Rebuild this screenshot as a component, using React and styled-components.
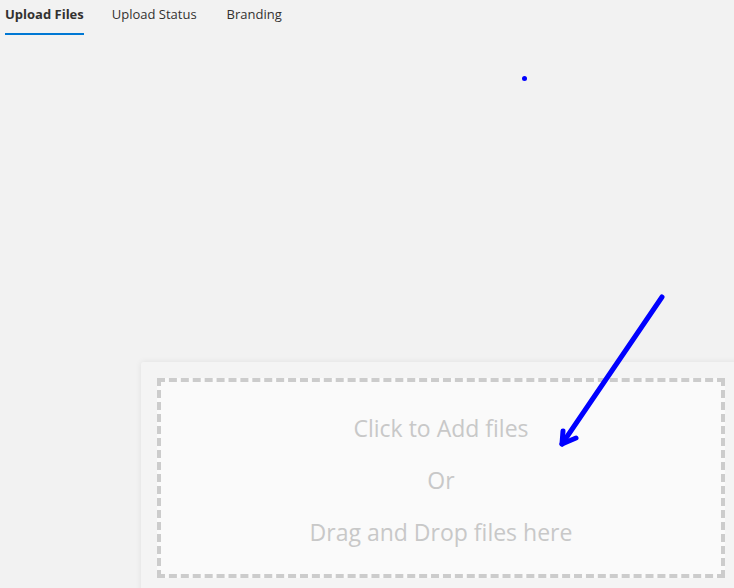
import styled, { createGlobalStyle } from 'styled-components'

const GlobalStyle = createGlobalStyle`
  html, body {
    margin: 0;
    padding: 0;
    height: 100%;
    overflow: hidden;
    background-color: #f2f2f2;
    font-family: 'Segoe UI', 'Open Sans', sans-serif;
  }
`

const Page = styled.div`
  position: relative;
  width: 734px;
  height: 588px;
  overflow: hidden;
`

const TabBar = styled.div`
  display: flex;
  gap: 23px;
  height: 36px;
  padding-left: 4px;
`

const Tab = styled.div`
  display: flex;
  flex-direction: column;
  align-items: center;
  padding: 4px 1px 0;
  font-size: 13px;
  line-height: 20px;
  color: #323130;
  font-weight: ${({ active }) => (active ? 700 : 400)};

  /* reserve the bold width so tabs don't shift */
  &::before {
    content: attr(data-label);
    display: block;
    height: 0;
    overflow: hidden;
    visibility: hidden;
    font-weight: 700;
  }

  &::after {
    content: '';
    align-self: stretch;
    height: 2px;
    margin: auto 0 1px;
    background-color: ${({ active }) => (active ? '#0078d4' : 'transparent')};
  }
`

const Card = styled.div`
  width: 600px;
  margin: 326px 0 0 141px;
  padding: 16px;
  background-color: #f4f4f4;
  box-shadow: 0 0 6px rgba(0, 0, 0, 0.08);
  border-radius: 2px;
`

const DropZone = styled.div`
  display: flex;
  flex-direction: column;
  align-items: center;
  width: 560px;
  height: 172px;
  padding-top: 20px;
  border: 4px dashed #cccccc;
  background-color: #fafafa;
`

const DropText = styled.div`
  font-size: 23px;
  line-height: 52px;
  color: #c8c8c8;
`

const Overlay = styled.svg`
  position: absolute;
  left: 0;
  top: 0;
  pointer-events: none;
`

const tabs = ['Upload Files', 'Upload Status', 'Branding']

function App() {
  return (
    <Page>
      <GlobalStyle />
      <TabBar>
        {tabs.map((label, i) => (
          <Tab key={label} data-label={label} active={i === 0}>
            {label}
          </Tab>
        ))}
      </TabBar>
      <Card>
        <DropZone>
          <DropText>Click to Add files</DropText>
          <DropText>Or</DropText>
          <DropText>Drag and Drop files here</DropText>
        </DropZone>
      </Card>
      <Overlay width="734" height="588" viewBox="0 0 734 588">
        <circle cx="524.5" cy="78.5" r="2.5" fill="#0000ff" />
        <g stroke="#0000ff" strokeWidth="5" strokeLinecap="round" strokeLinejoin="round" fill="none">
          <path d="M662 297 L562 444" />
          <path d="M563 431 L562 444 L576 438" />
        </g>
      </Overlay>
    </Page>
  )
}

export default App
